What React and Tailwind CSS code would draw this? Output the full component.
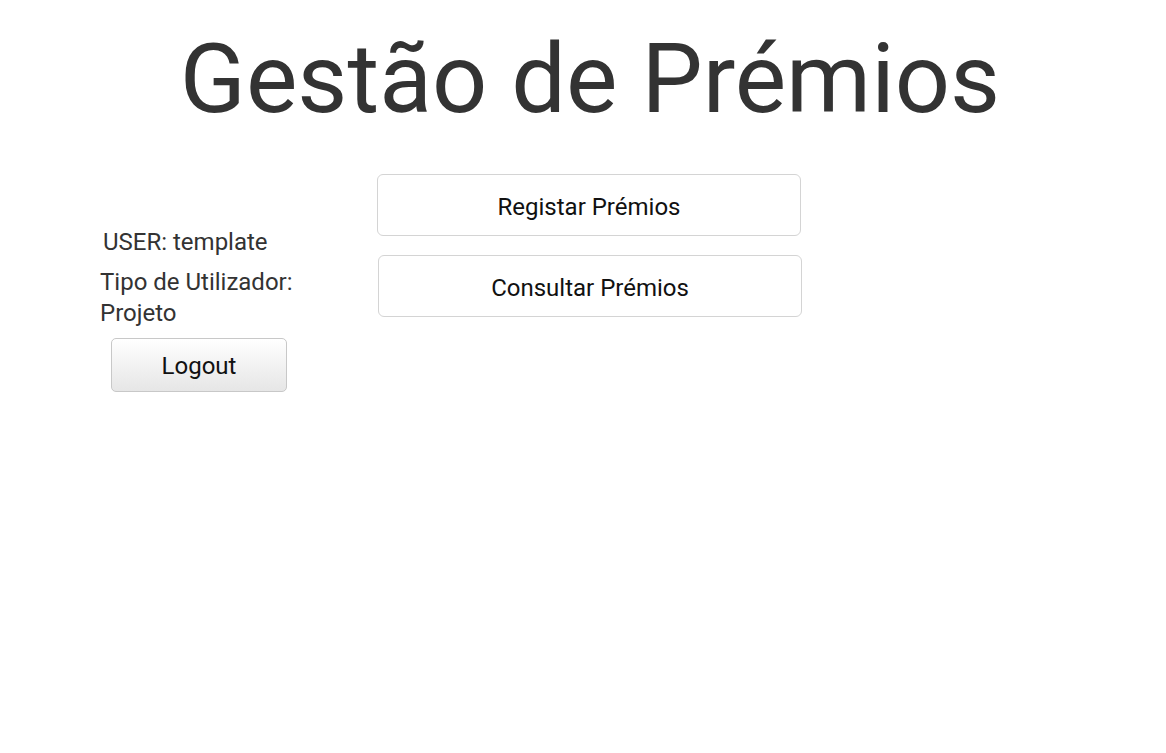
import React from 'react';

export default function App() {
  return (
    <div className="min-h-screen bg-white font-['Roboto',sans-serif] text-[#333]">
      <h1 className="pt-[31px] text-center text-[97px] leading-none font-normal pl-[14px]">Gestão de Prémios</h1>

      <div className="flex mt-[46px]">
        {/* user info */}
        <div className="w-[377px] pl-[100px] pt-[53px]">
          <p className="pl-[3px] text-[24px] leading-[30px]">USER: template</p>
          <p className="mt-[10px] text-[24px] leading-[31px] w-[205px]">Tipo de Utilizador: Projeto</p>
          <button className="ml-[11px] mt-[9px] w-[176px] h-[54px] pt-[2px] rounded-[5px] border border-[#c8c8c8] bg-gradient-to-b from-white to-[#e6e6e6] text-[24px] text-[#111]">
            Logout
          </button>
        </div>

        {/* actions */}
        <div className="flex flex-col gap-[19px]">
          <button className="w-[424px] h-[62px] pt-[3px] rounded-[6px] border border-[#d4d4d4] bg-white text-[24px] text-[#111]">
            Registar Prémios
          </button>
          <button className="ml-[1px] w-[424px] h-[62px] pt-[3px] rounded-[6px] border border-[#d4d4d4] bg-white text-[24px] text-[#111]">
            Consultar Prémios
          </button>
        </div>
      </div>
    </div>
  );
}
